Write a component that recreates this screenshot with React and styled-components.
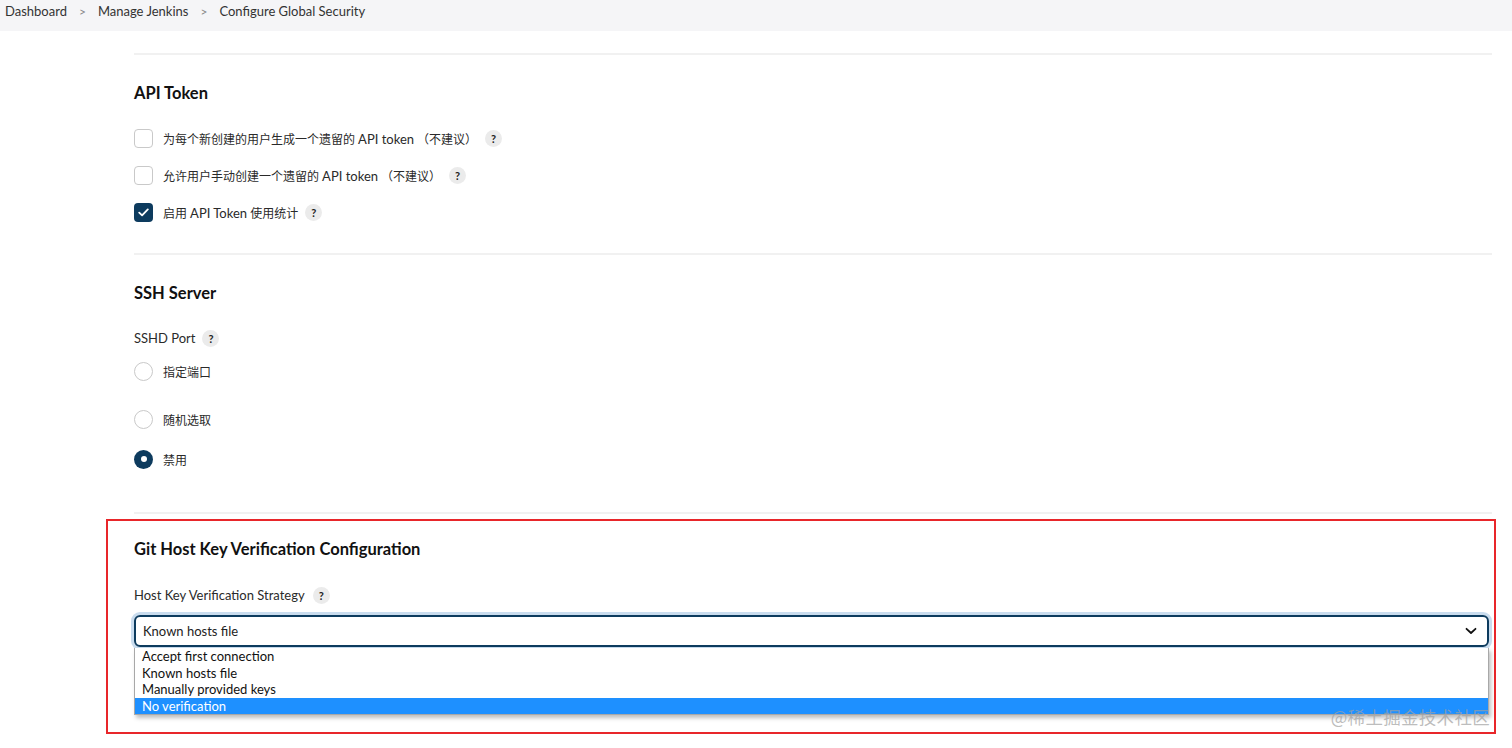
import React from "react";
import styled, { createGlobalStyle } from "styled-components";

const Global = createGlobalStyle`
  html, body { margin: 0; padding: 0; background: #fff; }
  body {
    font-family: "Lato", "Noto Sans CJK SC", sans-serif;
    color: #1f1f1f;
    width: 1512px;
    height: 748px;
    overflow: hidden;
  }
  * { box-sizing: border-box; }
`;

const Page = styled.div`
  position: relative;
  width: 1512px;
  height: 748px;
`;

const Breadcrumbs = styled.nav`
  height: 31px;
  background: #f5f5f7;
  display: flex;
  align-items: center;
  padding: 0 0 9px 5px;
  font-size: 13px;
  color: #333;
  gap: 11px;
`;

const Crumb = styled.span``;

const Sep = styled.span`
  color: #888;
  font-size: 12px;
  padding: 0 1px;
`;

const Main = styled.main`
  padding: 22px 20px 0 134px;
`;

const Divider = styled.div`
  height: 2px;
  background: #f1f1f1;
`;

const Section = styled.section`
  padding: ${(p) => p.$pad || "28px 0 22px"};
`;

const Heading = styled.h2`
  margin: 0;
  font-size: 16.5px;
  line-height: 20px;
  font-weight: 700;
  color: #111;
`;

const CheckList = styled.div`
  margin-top: 17px;
  display: flex;
  flex-direction: column;
`;

const Row = styled.label`
  display: flex;
  align-items: center;
  height: ${(p) => p.$h || 37}px;
  margin-top: ${(p) => p.$mt || 0}px;
  gap: 10px;
  font-size: 12px;
  color: #2a2a2a;
`;

const Latin = styled.span`
  font-size: 13px;
`;

const Box = styled.span`
  width: 19px;
  height: 19px;
  border-radius: 4px;
  border: ${(p) => (p.$checked ? "none" : "1.5px solid #c9c9c9")};
  background: ${(p) => (p.$checked ? "#0d3b5e" : "#fff")};
  display: inline-flex;
  align-items: center;
  justify-content: center;
  flex-shrink: 0;
`;

const Radio = styled.span`
  width: 19px;
  height: 19px;
  border-radius: 50%;
  border: ${(p) => (p.$checked ? "none" : "1.5px solid #c9c9c9")};
  background: ${(p) => (p.$checked ? "#0d3b5e" : "#fff")};
  display: inline-flex;
  align-items: center;
  justify-content: center;
  flex-shrink: 0;
  &::after {
    content: "";
    display: ${(p) => (p.$checked ? "block" : "none")};
    width: 6px;
    height: 6px;
    border-radius: 50%;
    background: #fff;
  }
`;

const Help = styled.span`
  width: 17px;
  height: 17px;
  border-radius: 50%;
  background: #ebebeb;
  color: #222;
  font-family: "Lato", sans-serif;
  font-size: 11px;
  font-weight: 700;
  display: inline-flex;
  align-items: center;
  justify-content: center;
  margin-left: ${(p) => p.$ml ?? 6}px;
  flex-shrink: 0;
`;

const FieldLabel = styled.div`
  display: flex;
  align-items: center;
  height: 20px;
  margin-top: ${(p) => p.$mt || 25}px;
  font-size: 13px;
  color: #2a2a2a;
`;

const RadioList = styled.div`
  display: flex;
  flex-direction: column;
  margin-top: 7px;
`;

const Highlight = styled.div`
  margin: 5px -4px 0 -28px;
  padding: 18px 2px 17px 26px;
  border: 2px solid #e8262a;
`;

const SelectBox = styled.div`
  margin-top: 10px;
  height: 32px;
  border: 2px solid #0d3b5e;
  border-radius: 6px;
  box-shadow: 0 0 0 3px #c9dcee;
  display: flex;
  align-items: center;
  justify-content: space-between;
  padding: 0 10px 0 7px;
  font-size: 13px;
  color: #222;
  margin-right: 3px;
`;

const Options = styled.ul`
  list-style: none;
  margin: 1px 3px 0 0;
  padding: 0;
  border: 1px solid #a8a8a8;
  border-top: none;
  background: #fff;
  box-shadow: 2px 3px 4px rgba(0, 0, 0, 0.25);
  font-size: 13px;
`;

const Option = styled.li`
  height: 16.5px;
  line-height: 16.5px;
  padding-left: 7px;
  color: ${(p) => (p.$active ? "#fff" : "#111")};
  background: ${(p) => (p.$active ? "#1e90ff" : "transparent")};
`;

const Watermark = styled.div`
  position: absolute;
  right: 22px;
  top: 704px;
  font-family: "Noto Sans CJK SC", sans-serif;
  font-size: 17.5px;
  color: rgba(160, 160, 160, 0.7);
  letter-spacing: 0.3px;
`;

const Check = () => (
  <svg width="11" height="9" viewBox="0 0 11 9" fill="none">
    <path d="M1.2 4.6 L4.1 7.4 L9.8 1.4" stroke="#fff" strokeWidth="1.8" strokeLinecap="round" strokeLinejoin="round" />
  </svg>
);

const Chevron = () => (
  <svg width="12" height="8" viewBox="0 0 12 8" fill="none">
    <path d="M1.5 1.8 L6 6 L10.5 1.8" stroke="#111" strokeWidth="1.8" strokeLinecap="round" strokeLinejoin="round" />
  </svg>
);

export default function App() {
  return (
    <Page>
      <Global />
      <Breadcrumbs>
        <Crumb>Dashboard</Crumb>
        <Sep>&gt;</Sep>
        <Crumb>Manage Jenkins</Crumb>
        <Sep>&gt;</Sep>
        <Crumb>Configure Global Security</Crumb>
      </Breadcrumbs>
      <Main>
        <Divider />
        <Section>
          <Heading>API Token</Heading>
          <CheckList>
            <Row>
              <Box />
              <span>
                为每个新创建的用户生成一个遗留的 <Latin>API token</Latin> （不建议）
              </span>
              <Help $ml={-2}>?</Help>
            </Row>
            <Row>
              <Box />
              <span>
                允许用户手动创建一个遗留的 <Latin>API token</Latin> （不建议）
              </span>
              <Help $ml={-2}>?</Help>
            </Row>
            <Row>
              <Box $checked>
                <Check />
              </Box>
              <span>
                启用 <Latin>API Token</Latin> 使用统计
              </span>
              <Help $ml={-3}>?</Help>
            </Row>
          </CheckList>
        </Section>
        <Divider />
        <Section $pad="28px 0 37px">
          <Heading>SSH Server</Heading>
          <FieldLabel>
            SSHD Port<Help $ml={7}>?</Help>
          </FieldLabel>
          <RadioList>
            <Row $h={32}>
              <Radio />
              <span>指定端口</span>
            </Row>
            <Row $h={32} $mt={16}>
              <Radio />
              <span>随机选取</span>
            </Row>
            <Row $h={32} $mt={8}>
              <Radio $checked />
              <span>禁用</span>
            </Row>
          </RadioList>
        </Section>
        <Divider />
        <Highlight>
          <Heading>Git Host Key Verification Configuration</Heading>
          <FieldLabel $mt={26}>
            Host Key Verification Strategy<Help $ml={8}>?</Help>
          </FieldLabel>
          <SelectBox>
            <span>Known hosts file</span>
            <Chevron />
          </SelectBox>
          <Options>
            <Option>Accept first connection</Option>
            <Option>Known hosts file</Option>
            <Option>Manually provided keys</Option>
            <Option $active>No verification</Option>
          </Options>
        </Highlight>
      </Main>
      <Watermark>@稀土掘金技术社区</Watermark>
    </Page>
  );
}
